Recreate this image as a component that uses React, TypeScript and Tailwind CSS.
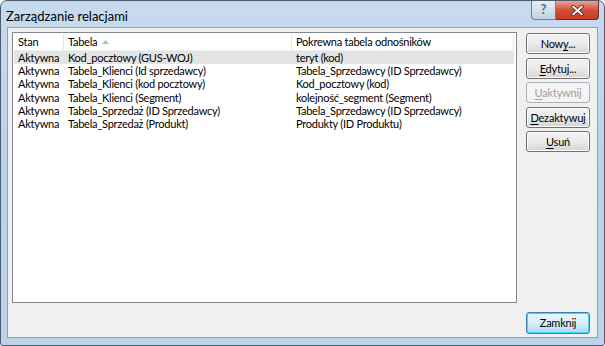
const rows = [
  { stan: 'Aktywna', tabela: 'Kod_pocztowy (GUS-WOJ)', pokrewna: 'teryt (kod)' },
  { stan: 'Aktywna', tabela: 'Tabela_Klienci (Id sprzedawcy)', pokrewna: 'Tabela_Sprzedawcy (ID Sprzedawcy)' },
  { stan: 'Aktywna', tabela: 'Tabela_Klienci (kod pocztowy)', pokrewna: 'Kod_pocztowy (kod)' },
  { stan: 'Aktywna', tabela: 'Tabela_Klienci (Segment)', pokrewna: 'kolejność_segment (Segment)' },
  { stan: 'Aktywna', tabela: 'Tabela_Sprzedaż (ID Sprzedawcy)', pokrewna: 'Tabela_Sprzedawcy (ID Sprzedawcy)' },
  { stan: 'Aktywna', tabela: 'Tabela_Sprzedaż (Produkt)', pokrewna: 'Produkty (ID Produktu)' },
];

function DlgButton({ pre, key1, post, disabled }: { pre?: string; key1?: string; post?: string; disabled?: boolean }) {
  return (
    <button
      className={`h-[21px] w-[64px] rounded-[3px] border text-[11px] tracking-[-0.2px] leading-none whitespace-nowrap ${
        disabled
          ? 'border-[#adb2b5] bg-[#f4f4f4] text-[#a0a0a0]'
          : 'border-[#707070] bg-gradient-to-b from-[#f2f2f2] via-[#ebebeb] to-[#d4d4d4] text-black shadow-[inset_0_0_0_1px_#fcfcfc]'
      }`}
    >
      {pre}
      {key1 && <span className="underline underline-offset-2">{key1}</span>}
      {post}
    </button>
  );
}

export default function App() {
  return (
    <div
      className="w-[605px] h-[346px] flex flex-col rounded-t-[7px] rounded-b-[3px] border border-[#4d5b6b] bg-gradient-to-b from-[#c7dbef] via-[#b9d1ea] to-[#bcd3eb] overflow-hidden"
      style={{ fontFamily: 'Lato, "Liberation Sans", sans-serif' }}
    >
      {/* Title bar */}
      <div className="h-[26px] flex items-start relative">
        <div className="pl-[5px] pt-[6px] text-[13px] text-black">Zarządzanie relacjami</div>
        <div className="ml-auto mr-[5px] flex">
          <div className="w-[25px] h-[19px] rounded-bl-[4px] border border-t-0 border-[#6f7f92] bg-gradient-to-b from-[#e6eef7] via-[#d3e0ee] to-[#c0d2e6] flex items-center justify-center text-[13px] font-bold text-[#5a6a7c]">
            ?
          </div>
          <div className="w-[43px] h-[19px] rounded-br-[4px] border border-l-0 border-t-0 border-[#6b2a22] bg-gradient-to-b from-[#e8a493] via-[#d0503a] to-[#c83a22] flex items-center justify-center">
            <svg width="13" height="11" viewBox="0 0 13 11">
              <path d="M2 1.5 L11 9.5 M11 1.5 L2 9.5" stroke="#4a1a12" strokeWidth="3.4" strokeLinecap="round" />
              <path d="M2 1.5 L11 9.5 M11 1.5 L2 9.5" stroke="#ffffff" strokeWidth="1.8" strokeLinecap="round" />
            </svg>
          </div>
        </div>
      </div>

      {/* Client area */}
      <div className="flex-1 mx-[6px] mb-[7px] border border-[#8da2b8] bg-[#f0f0f0] flex flex-col pt-[4px] pl-[4px] pr-[7px] pb-[3px] text-[11px] tracking-[-0.25px] text-black">
        <div className="flex flex-1 gap-[9px]">
          {/* List */}
          <div className="flex-1 border border-[#828790] bg-white pt-[1px] pl-[1px] pr-[2px]">
            <div className="flex h-[17px] items-center border-b border-[#f0f0f0]">
              <div className="w-[50px] pl-[4px] border-r border-[#e5e5e5] h-full flex items-center">Stan</div>
              <div className="w-[228px] pl-[4px] border-r border-[#e5e5e5] h-full flex items-center gap-[5px]">
                Tabela
                <svg width="7" height="4" viewBox="0 0 7 4">
                  <path d="M0 4 L3.5 0 L7 4 Z" fill="#b5bec8" />
                </svg>
              </div>
              <div className="flex-1 pl-[4px] border-r border-[#e5e5e5] h-full flex items-center">Pokrewna tabela odnośników</div>
            </div>
            {rows.map((r, i) => (
              <div
                key={i}
                className={`flex h-[13.2px] items-center leading-[13px] ${i === 0 ? 'bg-[#e4e4e4]' : ''}`}
              >
                <div className="w-[50px] pl-[4px] whitespace-nowrap">{r.stan}</div>
                <div className="w-[228px] pl-[4px] whitespace-nowrap">{r.tabela}</div>
                <div className="flex-1 pl-[4px] whitespace-nowrap">{r.pokrewna}</div>
              </div>
            ))}
          </div>
          {/* Buttons */}
          <div className="flex flex-col gap-[3.5px] pt-[1px]">
            <DlgButton pre="Now" key1="y" post="..." />
            <DlgButton key1="E" post="dytuj..." />
            <DlgButton key1="U" post="aktywnij" disabled />
            <DlgButton key1="D" post="ezaktywuj" />
            <DlgButton key1="U" post="suń" />
          </div>
        </div>
        <div className="flex justify-end mt-[9px]">
          <button className="h-[22px] w-[64px] rounded-[3px] border border-[#3c7fb1] bg-gradient-to-b from-[#eaf6fd] via-[#d9f0fc] to-[#a7d9f5] shadow-[inset_0_0_0_1px_#48d1fe] text-[11px]">
            Zamknij
          </button>
        </div>
      </div>
    </div>
  );
}
